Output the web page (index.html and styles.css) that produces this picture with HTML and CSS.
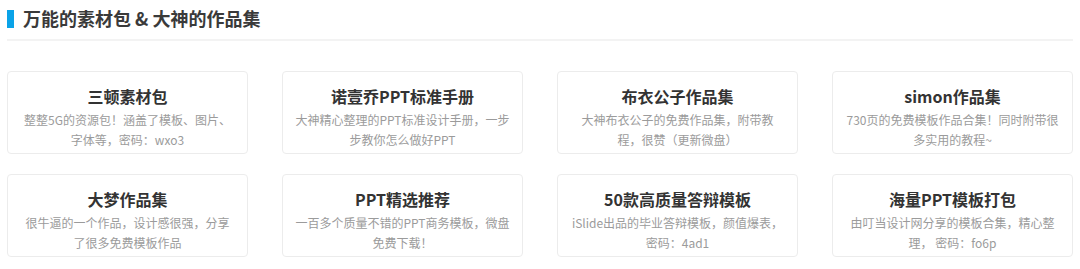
FILE: index.html
```html
<!DOCTYPE html>
<html lang="zh-CN">
<head>
  <meta charset="UTF-8">
  <title>万能的素材包 &amp; 大神的作品集</title>
  <link rel="stylesheet" href="styles.css">
</head>
<body>
  <div class="section">
    <div class="heading">
      <span class="bar"></span>
      <h2>万能的素材包 &amp; 大神的作品集</h2>
    </div>

    <div class="cards">
      <div class="card">
        <div class="title">三顿素材包</div>
        <div class="desc">整整5G的资源包！涵盖了模板、图片、字体等，密码：wxo3</div>
      </div>
      <div class="card">
        <div class="title">诺壹乔PPT标准手册</div>
        <div class="desc">大神精心整理的PPT标准设计手册，一步步教你怎么做好PPT</div>
      </div>
      <div class="card">
        <div class="title">布衣公子作品集</div>
        <div class="desc">大神布衣公子的免费作品集，附带教程，很赞（更新微盘）</div>
      </div>
      <div class="card">
        <div class="title">simon作品集</div>
        <div class="desc">730页的免费模板作品合集！同时附带很多实用的教程~</div>
      </div>
      <div class="card">
        <div class="title">大梦作品集</div>
        <div class="desc">很牛逼的一个作品，设计感很强，分享了很多免费模板作品</div>
      </div>
      <div class="card">
        <div class="title">PPT精选推荐</div>
        <div class="desc">一百多个质量不错的PPT商务模板，微盘免费下载！</div>
      </div>
      <div class="card">
        <div class="title">50款高质量答辩模板</div>
        <div class="desc">iSlide出品的毕业答辩模板，颜值爆表，密码：4ad1</div>
      </div>
      <div class="card">
        <div class="title">海量PPT模板打包</div>
        <div class="desc">由叮当设计网分享的模板合集，精心整理， 密码：fo6p</div>
      </div>
    </div>
  </div>
</body>
</html>
```

FILE: styles.css
```css
html, body {
  margin: 0;
  padding: 0;
  background: #fff;
  font-family: "Microsoft YaHei", "Noto Sans CJK SC", "Noto Sans", sans-serif;
}

.section {
  padding: 0 7px;
}

.heading {
  display: flex;
  align-items: center;
  gap: 9px;
  height: 39px;
  border-bottom: 2px solid #f3f3f3;
  margin-bottom: 30px;
}
.bar {
  width: 7px;
  height: 18px;
  background: #0aa3e8;
  margin-top: -2px;
}
.heading h2 {
  margin: 0;
  font-size: 18px;
  font-weight: bold;
  color: #3a3a3a;
  line-height: 24px;
  margin-top: -4px;
}

.cards {
  display: grid;
  grid-template-columns: repeat(4, 241px);
  column-gap: 34px;
  row-gap: 20px;
}
.card {
  box-sizing: border-box;
  height: 83px;
  border: 1px solid #ececec;
  border-radius: 4px;
  padding: 13px 12px 0;
  text-align: center;
}
.title {
  font-size: 16px;
  font-weight: bold;
  color: #333;
  line-height: 22px;
}
.desc {
  margin-top: 3px;
  font-size: 12px;
  color: #9b9b9b;
  line-height: 19.5px;
}
```
